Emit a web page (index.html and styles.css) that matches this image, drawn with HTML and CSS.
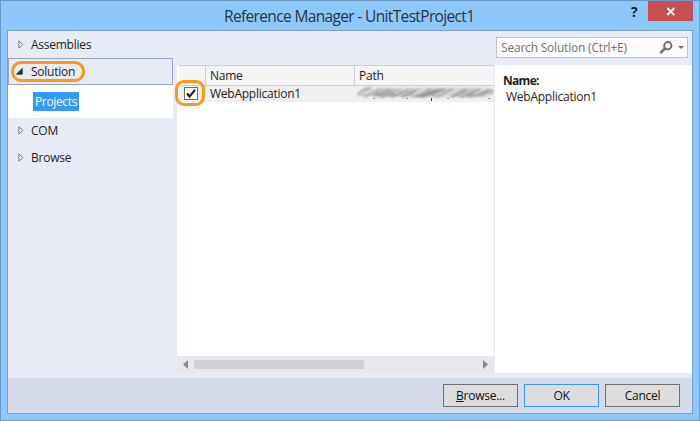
FILE: index.html
```html
<!DOCTYPE html>
<html lang="en">
<head>
<meta charset="utf-8">
<title>Reference Manager</title>
<link rel="stylesheet" href="styles.css">
</head>
<body>
<div class="window">
  <header class="titlebar">
    <h1>Reference Manager - UnitTestProject1</h1>
    <span class="help">?</span>
    <span class="close"><svg width="10" height="9" viewBox="0 0 10 9"><path d="M1.3 1l7 7M8.3 1l-7 7" stroke="#fff" stroke-width="1.8" fill="none"/></svg></span>
  </header>
  <div class="client">
    <div class="main">
      <nav class="sidebar">
        <div class="item"><svg class="arrow" width="6" height="9" viewBox="0 0 6 9"><path d="M.9 .9v7.2L4.9 4.5z" fill="#fff" stroke="#737378"/></svg><span>Assemblies</span></div>
        <div class="item selected"><svg class="arrow open" width="7" height="7" viewBox="0 0 7 7"><path d="M6.3 .3v6H.4z" fill="#333" stroke="#222" stroke-width=".7"/></svg><span>Solution</span><i class="ring ring-solution"></i></div>
        <div class="children"><span class="child">Projects</span></div>
        <div class="item"><svg class="arrow" width="6" height="9" viewBox="0 0 6 9"><path d="M.9 .9v7.2L4.9 4.5z" fill="#fff" stroke="#737378"/></svg><span>COM</span></div>
        <div class="item"><svg class="arrow" width="6" height="9" viewBox="0 0 6 9"><path d="M.9 .9v7.2L4.9 4.5z" fill="#fff" stroke="#737378"/></svg><span>Browse</span></div>
      </nav>
      <section class="list">
        <div class="row head"><span></span><span class="cell">Name</span><span class="cell">Path</span></div>
        <div class="row body">
          <span class="checkcell"><span class="check"><svg width="12" height="11" viewBox="0 0 12 11"><path d="M2 5.5l2.6 3L10 1.8" fill="none" stroke="#1e1e1e" stroke-width="2.1"/></svg></span><i class="ring ring-check"></i></span>
          <span class="cell">WebApplication1</span>
          <span class="scribble"><svg width="138" height="16" viewBox="0 0 138 16">
            <defs><filter id="soft" x="-5%" y="-20%" width="110%" height="140%"><feGaussianBlur stdDeviation=".9"/></filter></defs>
            <g filter="url(#soft)" fill="none" stroke-linecap="round">
              <path d="M3 10L9 3 20 2h112l6 2v4L128 11H22l-8-1z" fill="#c6c6c6"/>
              <path d="M2 9Q5 3 14 2M9 11L24 3M57 11L75 3M82 11L96 3M122 10l14-6" stroke="#aaa" stroke-width="1.8"/>
              <path d="M19 10L34 4M25 11L45 4M35 11L51 4M46 11L60 5M61 11L82 4M66 11L88 3M96 11L110 4M105 11L124 4M113 11L132 5" stroke="#888" stroke-width="1.5"/>
              <path d="M20 6l7 5M71 5l9 6" stroke="#999" stroke-width="1.2"/>
              <path d="M9 7L20 3M39 7L50 3M58 8L69 3M89 10L103 3M119 8L129 3" stroke="#e8e8e8" stroke-width="1.5"/>
            </g>
            <path d="M17 12h1v1h-1zM50 12h1v1h-1zM91 12h1v1h-1zM132 12h1v1h-1z" fill="#e39545"/><path d="M18 12h1v1h-1zM51 12h1v1h-1zM92 12h1v1h-1zM133 12h1v1h-1z" fill="#3c9bd0"/><path d="M75 12h1v3h-1z" fill="#742041"/>
          </svg></span>
        </div>
        <div class="space"></div>
        <div class="scroll"><svg width="5" height="9" viewBox="0 0 5 9"><path d="M5 0v9L0 4.5z" fill="#868999"/></svg><span class="thumb"></span><svg width="5" height="9" viewBox="0 0 5 9"><path d="M0 0v9L5 4.5z" fill="#868999"/></svg></div>
      </section>
      <aside class="side">
        <div class="search"><span class="hint">Search Solution (Ctrl+E)</span>
          <svg class="glass" width="14" height="13" viewBox="0 0 14 13"><circle cx="8.8" cy="4.7" r="3.6" fill="none" stroke="#717171" stroke-width="2"/><path d="M6.2 7.3L1.3 11.9" stroke="#717171" stroke-width="2.8"/></svg>
          <svg class="drop" width="6" height="3" viewBox="0 0 6 3"><path d="M0 0h6L3 3z" fill="#717171"/></svg>
        </div>
        <div class="details"><b>Name:</b><span>WebApplication1</span></div>
      </aside>
    </div>
    <footer class="footer">
      <button><u>B</u>rowse...</button><button class="default">OK</button><button>Cancel</button>
    </footer>
  </div>
</div>
</body>
</html>
```

FILE: styles.css
```css
* { box-sizing: border-box; }
body { margin: 0; font: 12px/16px "Open Sans", "Noto Sans", sans-serif; letter-spacing: -.25px; color: #1e1e1e; }
svg { display: block; flex: none; }
.window { width: 700px; height: 421px; background: #8cc8fb; border: 1px solid #6b98c4; padding: 0 6px 6px; display: flex; flex-direction: column; }
.titlebar { height: 29px; display: grid; grid-template-columns: 209px 1fr 30px 45px 6px; width: 692px; flex: none; }
h1 { grid-column: 2; margin: 0; padding-left: 8px; font-size: 15.5px; line-height: 30px; font-weight: 400; letter-spacing: -.65px; white-space: nowrap; color: #28343f; }
.help { font-size: 14px; font-weight: 700; line-height: 21px; padding-left: 19px; margin-left: -6px; }
.close { height: 20px; background: #c75050; display: flex; align-items: center; justify-content: center; padding-top: 1px; }
.client { flex: 1; border: 1px solid #7b9fc6; display: flex; flex-direction: column; background: #e6ebf6; }
.main { flex: 1; display: grid; grid-template-columns: 169px 317px 1fr; padding-bottom: 5px; min-height: 0; }
.sidebar { width: 165px; }
.item { height: 27px; display: flex; align-items: center; padding-left: 10px; position: relative; }
.item .arrow { margin-right: 7px; }
.item.selected { border: 1px solid #93a5c8; padding-left: 7px; }
.item .open { margin-right: 8px; }
.children { height: 33px; margin-bottom: -1px; background: #fff; padding: 7px 0 0 25px; }
.child { display: block; width: 46px; height: 19px; line-height: 20px; padding-left: 2px; background: #3399ff; color: #fff; white-space: nowrap; letter-spacing: -.35px; }
.ring { position: absolute; border: 3px solid #ff9000; opacity: .93; }
.ring-solution { left: 2px; top: 2px; width: 74px; height: 21px; border-radius: 10px; }
.ring-check { left: -4px; top: -6px; width: 30px; height: 26px; border-radius: 9px; }
.list { margin-top: 34px; background: #fff; display: flex; flex-direction: column; }
.row { display: grid; grid-template-columns: 26px 149px 1fr; margin-left: 2px; }
.head { height: 21px; background: #f5f5f5; border-top: 1px solid #cccedb; border-bottom: 1px solid #cccedb; }
.head .cell { border-left: 1px solid #cccedb; line-height: 20px; padding-left: 4px; }
.body { height: 16px; background: #f0f0f0; }
.body .cell { padding-left: 5px; line-height: 16px; }
.checkcell { position: relative; padding: 1px 0 0 5px; }
.check { display: block; width: 14px; height: 13px; border: 1px solid #717171; background: #fff; }
.scribble { overflow: hidden; padding-left: 2px; }
.space { flex: 1; }
.scroll { height: 17px; background: #e8e8ec; display: flex; align-items: center; padding: 0 6px; }
.thumb { width: 170px; height: 9px; background: #d0d1d7; margin: 0 auto 0 6px; }
.side { display: flex; flex-direction: column; padding-left: 1px; }
.search { height: 21px; width: 192px; margin: 6px 0 7px 1px; background: #fcfcfc; border: 1px solid #bbc0d2; display: flex; align-items: center; padding: 0 3px 0 4px; color: #717171; white-space: nowrap; }
.hint { letter-spacing: -.2px; }
.glass { margin-left: auto; }
.drop { margin-left: 5px; }
.details { flex: 1; background: #fff; padding: 8px; display: flex; flex-direction: column; line-height: 16px; }
.details b { letter-spacing: -.7px; }
.details span { padding-left: 3px; }
.footer { height: 35px; background: #d6dbe9; padding: 6px 12px 0 0; display: flex; justify-content: flex-end; gap: 6px; }
button { width: 75px; height: 23px; border: 1px solid #707070; background: #ddd; padding: 0; font: inherit; letter-spacing: inherit; color: #111; }
.default { border-color: #3399ff; }
```
